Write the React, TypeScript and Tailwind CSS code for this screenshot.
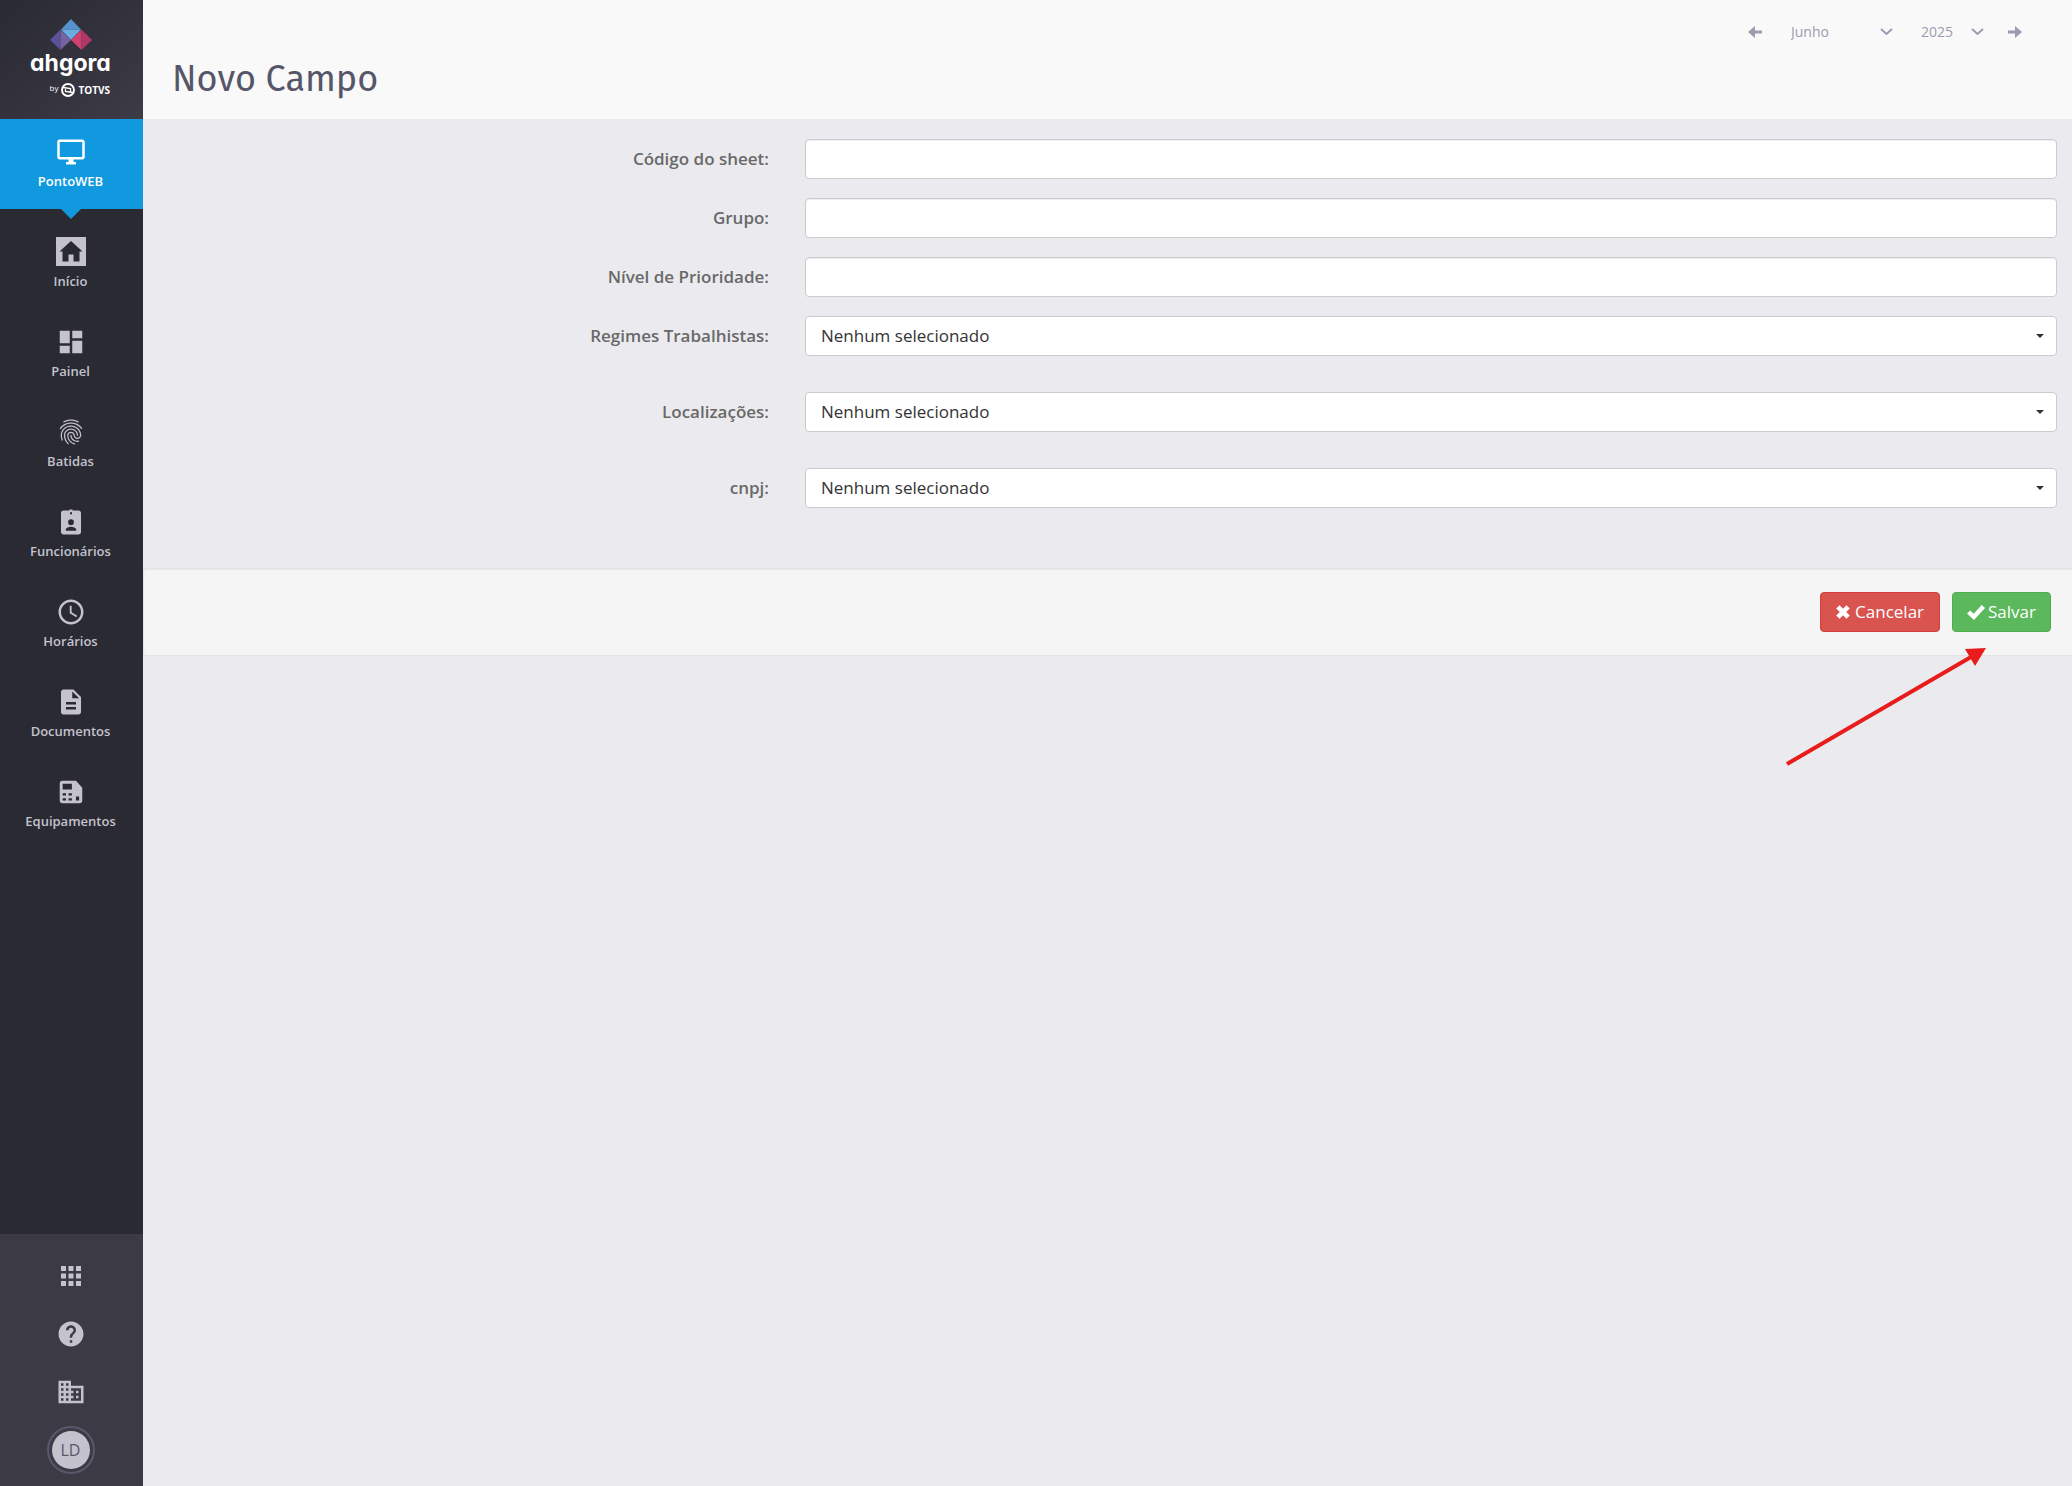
import { useState } from "react";
import type { ReactNode } from "react";
import {
  MdAccessTime,
  MdApps,
  MdBusiness,
  MdDashboard,
  MdDescription,
  MdFingerprint,
  MdHelp,
  MdOutlineDesktopWindows,
} from "react-icons/md";

const months = [
  "Janeiro",
  "Fevereiro",
  "Março",
  "Abril",
  "Maio",
  "Junho",
  "Julho",
  "Agosto",
  "Setembro",
  "Outubro",
  "Novembro",
  "Dezembro",
];

function HomeIcon() {
  return (
    <svg width="30" height="30" viewBox="0 0 30 30" fill="currentColor" aria-hidden="true">
      <path
        fillRule="evenodd"
        d="M0 0H30V29H0ZM15 4L3.5 14.5H6.500V24.500H12.500V17.500H17.500V24.500H23.500V14.500H26.500Z"
      />
    </svg>
  );
}

function BadgeIcon() {
  return (
    <svg width="30" height="30" viewBox="0 0 24 24" fill="currentColor" aria-hidden="true">
      <path
        fillRule="evenodd"
        d="M6 2.800H10.800V2H13.200V2.800H18C19.100 2.800 20 3.700 20 4.800V20C20 21.100 19.100 22 18 22H6C4.900 22 4 21.100 4 20V4.800C4 3.700 4.900 2.800 6 2.800ZM11.200 4.200V5.800H12.800V4.200ZM12 9.800A2.300 2.300 0 1 0 12 14.400A2.300 2.300 0 1 0 12 9.800ZM7.800 19H16.200V18C16.200 16.500 13.500 15.700 12 15.700S7.800 16.500 7.800 18Z"
      />
    </svg>
  );
}

function DeviceIcon() {
  return (
    <svg width="30" height="30" viewBox="0 0 24 24" fill="currentColor" aria-hidden="true">
      <path
        fillRule="evenodd"
        d="M5 3H16L21 8.500V19C21 20.100 20.100 21 19 21H5C3.900 21 3 20.100 3 19V5C3 3.900 3.900 3 5 3ZM5.300 5.300V10H12.700V5.300ZM5.300 13V14.800H8V13ZM10 13V14.800H12.700V13ZM5.300 17V18.800H8V17ZM10 17V18.800H12.700V17ZM16 15.500V18.800H18.500V15.500Z"
      />
    </svg>
  );
}

const menu: { label: string; icon: ReactNode }[] = [
  { label: "Início", icon: <HomeIcon /> },
  { label: "Painel", icon: <MdDashboard size={30} /> },
  { label: "Batidas", icon: <MdFingerprint size={30} /> },
  { label: "Funcionários", icon: <BadgeIcon /> },
  { label: "Horários", icon: <MdAccessTime size={30} /> },
  { label: "Documentos", icon: <MdDescription size={30} /> },
  { label: "Equipamentos", icon: <DeviceIcon /> },
];

function Logo() {
  return (
    <a
      href="#"
      className="flex h-[119px] flex-col items-center bg-linear-to-br from-[#2a2a33] to-[#3c3b46] pt-[19px] pr-0.5 text-white"
    >
      <svg width="42" height="32" viewBox="0 0 42 32" aria-hidden="true">
        <path d="M21 0L31 10.500H11Z" fill="#5692cd" />
        <path d="M11 10.500H31L21 21Z" fill="#68ade2" />
        <path d="M10.500 10.500V31L0 21Z" fill="#5c529b" />
        <path d="M10.500 10.500L21 21L10.500 31Z" fill="#7562a1" />
        <path d="M31.500 10.500V31L21 21Z" fill="#d4406d" />
        <path d="M31.500 10.500L42 21L31.500 31Z" fill="#b0376a" />
      </svg>
      <span className="font-[Inter,sans-serif] text-[23px] leading-6 font-bold [font-feature-settings:'cv11']">
        ahgora
      </span>
      <span className="flex items-center gap-[3px] self-end pt-[7px] pr-[31px] text-[10px] leading-4 font-bold">
        <small className="pb-1 text-[8px] leading-3 font-normal">by</small>
        <svg width="14" height="14" viewBox="0 0 14 14" fill="none" stroke="currentColor" aria-hidden="true">
          <circle cx="7" cy="7" r="6" strokeWidth="1.900" />
          <path d="M2 4.500L9.500 5.500V9M12 9.500L4.500 8.500V5" strokeWidth="1.300" />
        </svg>
        TOTVS
      </span>
    </a>
  );
}

function Sidebar() {
  return (
    <aside className="flex w-[143px] shrink-0 flex-col bg-[#2a2a33] text-[#c3c2cd]">
      <Logo />
      <a
        href="#"
        className="relative flex flex-col items-center gap-[5px] bg-[#1199df] pt-[18px] pr-0.5 pb-[19px] text-[13px] leading-[18px] font-semibold text-white"
      >
        <MdOutlineDesktopWindows size={30} />
        PontoWEB
        <svg className="absolute top-full" width="20" height="10" viewBox="0 0 20 10" aria-hidden="true">
          <path d="M0 0H20L10 10Z" fill="#1199df" />
        </svg>
      </a>
      <nav className="flex grow flex-col pt-[10px]">
        {menu.map((item) => (
          <a
            key={item.label}
            href="#"
            className="flex flex-col items-center gap-[5px] pt-[18px] pr-0.5 pb-[19px] text-[13px] leading-[18px] font-semibold"
          >
            {item.icon}
            {item.label}
          </a>
        ))}
      </nav>
      <div className="flex flex-col items-center gap-7 bg-[#3b3a45] pt-[27px] pr-0.5 pb-3">
        <button type="button" aria-label="Aplicativos">
          <MdApps size={30} />
        </button>
        <button type="button" aria-label="Ajuda">
          <MdHelp size={30} />
        </button>
        <button type="button" aria-label="Empresa">
          <MdBusiness size={30} />
        </button>
        <button
          type="button"
          className="-mt-[9px] flex size-12 items-center justify-center rounded-full border-2 border-[#5a586b] p-[3px]"
        >
          <span className="flex size-full items-center justify-center rounded-full bg-[#c3c2cd] text-base text-[#5a586b]">
            LD
          </span>
        </button>
      </div>
    </aside>
  );
}

function Chevron() {
  return (
    <svg
      className="pointer-events-none absolute right-0"
      width="13"
      height="8"
      viewBox="0 0 13 8"
      fill="none"
      stroke="currentColor"
      strokeWidth="2"
      aria-hidden="true"
    >
      <path d="M1 1L6.500 6L12 1" />
    </svg>
  );
}

function PeriodPicker() {
  const [month, setMonth] = useState("Junho");
  const [year, setYear] = useState("2025");

  return (
    <div className="flex items-center text-sm text-[#9d9bb0]">
      <button type="button" aria-label="Mês anterior">
        <svg width="14" height="12" viewBox="0 0 14 12" fill="currentColor" aria-hidden="true">
          <path d="M0 6L7 0V4.500H14V7.500H7V12Z" />
        </svg>
      </button>
      <div className="relative ml-[29px] flex w-[102px] items-center">
        <select
          aria-label="Mês"
          value={month}
          onChange={(e) => setMonth(e.target.value)}
          className="w-full appearance-none bg-transparent"
        >
          {months.map((m) => (
            <option key={m}>{m}</option>
          ))}
        </select>
        <Chevron />
      </div>
      <div className="relative ml-7 flex w-[63px] items-center">
        <select
          aria-label="Ano"
          value={year}
          onChange={(e) => setYear(e.target.value)}
          className="w-full appearance-none bg-transparent"
        >
          <option>2024</option>
          <option>2025</option>
        </select>
        <Chevron />
      </div>
      <button type="button" aria-label="Próximo mês" className="ml-6">
        <svg width="14" height="12" viewBox="0 0 14 12" fill="currentColor" aria-hidden="true">
          <path d="M14 6L7 0V4.500H0V7.500H7V12Z" />
        </svg>
      </button>
    </div>
  );
}

function Row({ id, label, children }: { id: string; label: string; children: ReactNode }) {
  return (
    <div className="grid grid-cols-[1fr_2fr] items-center gap-9 pr-[15px]">
      <label htmlFor={id} className="text-right text-[17px] leading-6 font-semibold text-[#696969]">
        {label}
      </label>
      {children}
    </div>
  );
}

function TextField({ id, label }: { id: string; label: string }) {
  return (
    <Row id={id} label={label}>
      <input
        id={id}
        type="text"
        className="h-10 w-full rounded border border-[#ccc] bg-white px-[15px] text-[17px] text-[#333] shadow-[inset_0_1px_1px_rgba(0,0,0,0.075)]"
      />
    </Row>
  );
}

function SelectField({ id, label }: { id: string; label: string }) {
  return (
    <Row id={id} label={label}>
      <div className="relative flex items-center">
        <select
          id={id}
          className="h-10 w-full appearance-none rounded border border-[#ccc] bg-white px-[15px] text-[17px] text-[#333]"
        >
          <option>Nenhum selecionado</option>
        </select>
        <svg
          className="pointer-events-none absolute right-[13px]"
          width="8"
          height="4"
          viewBox="0 0 8 4"
          fill="#333"
          aria-hidden="true"
        >
          <path d="M0 0H8L4 4Z" />
        </svg>
      </div>
    </Row>
  );
}

export default function App() {
  return (
    <div className="flex min-h-screen bg-[#ebebef] font-['Open_Sans',sans-serif]">
      <Sidebar />
      <main className="min-w-0 grow">
        <header className="flex h-[119px] items-start justify-between bg-[#f9f9f9] pt-[22px] pr-[50px] pl-[29px]">
          <h1 className="pt-8 font-['Fira_Sans','Noto_Sans',sans-serif] text-4xl leading-[50px] text-[#565669]">
            Novo Campo
          </h1>
          <PeriodPicker />
        </header>

        <form className="pt-5" onSubmit={(e) => e.preventDefault()}>
          <div className="flex flex-col gap-[19px]">
            <TextField id="codigo" label="Código do sheet:" />
            <TextField id="grupo" label="Grupo:" />
            <TextField id="prioridade" label="Nível de Prioridade:" />
            <div className="flex flex-col gap-9">
              <SelectField id="regimes" label="Regimes Trabalhistas:" />
              <SelectField id="localizacoes" label="Localizações:" />
              <SelectField id="cnpj" label="cnpj:" />
            </div>
          </div>

          <div className="relative mt-[60px] flex justify-end gap-3 rounded-l border border-r-0 border-[#e3e3e3] bg-[#f5f5f5] py-[23px] pr-[21px] shadow-[inset_0_1px_1px_rgba(0,0,0,0.05)]">
            <button
              type="button"
              className="flex h-10 items-center gap-[5px] rounded border border-[#d43f3a] bg-[#d9534f] px-[15px] text-[17px] text-white"
            >
              <svg width="14" height="14" viewBox="0 0 15 15" fill="none" stroke="currentColor" strokeWidth="5" aria-hidden="true">
                <path d="M2 2L13 13M13 2L2 13" />
              </svg>
              Cancelar
            </button>
            <button
              type="submit"
              className="flex h-10 items-center gap-[3px] rounded border border-[#4cae4c] bg-[#5cb85c] px-[14px] text-[17px] text-white"
            >
              <svg width="18" height="15" viewBox="0 0 18 15" fill="currentColor" aria-hidden="true">
                <path d="M0 8.500L3.200 5.500L6.700 8.700L14.700 0L18 3L7 15Z" />
              </svg>
              Salvar
            </button>
            {/* red pointer to the save button */}
            <svg
              className="pointer-events-none absolute top-[78px] right-[84px]"
              width="202"
              height="120"
              viewBox="0 0 202 120"
              aria-hidden="true"
            >
              <path d="M1 117L185 10" stroke="#e91c1c" strokeWidth="4" />
              <path d="M200 1L179 2L189 19Z" fill="#e91c1c" />
            </svg>
          </div>
        </form>
      </main>
    </div>
  );
}
